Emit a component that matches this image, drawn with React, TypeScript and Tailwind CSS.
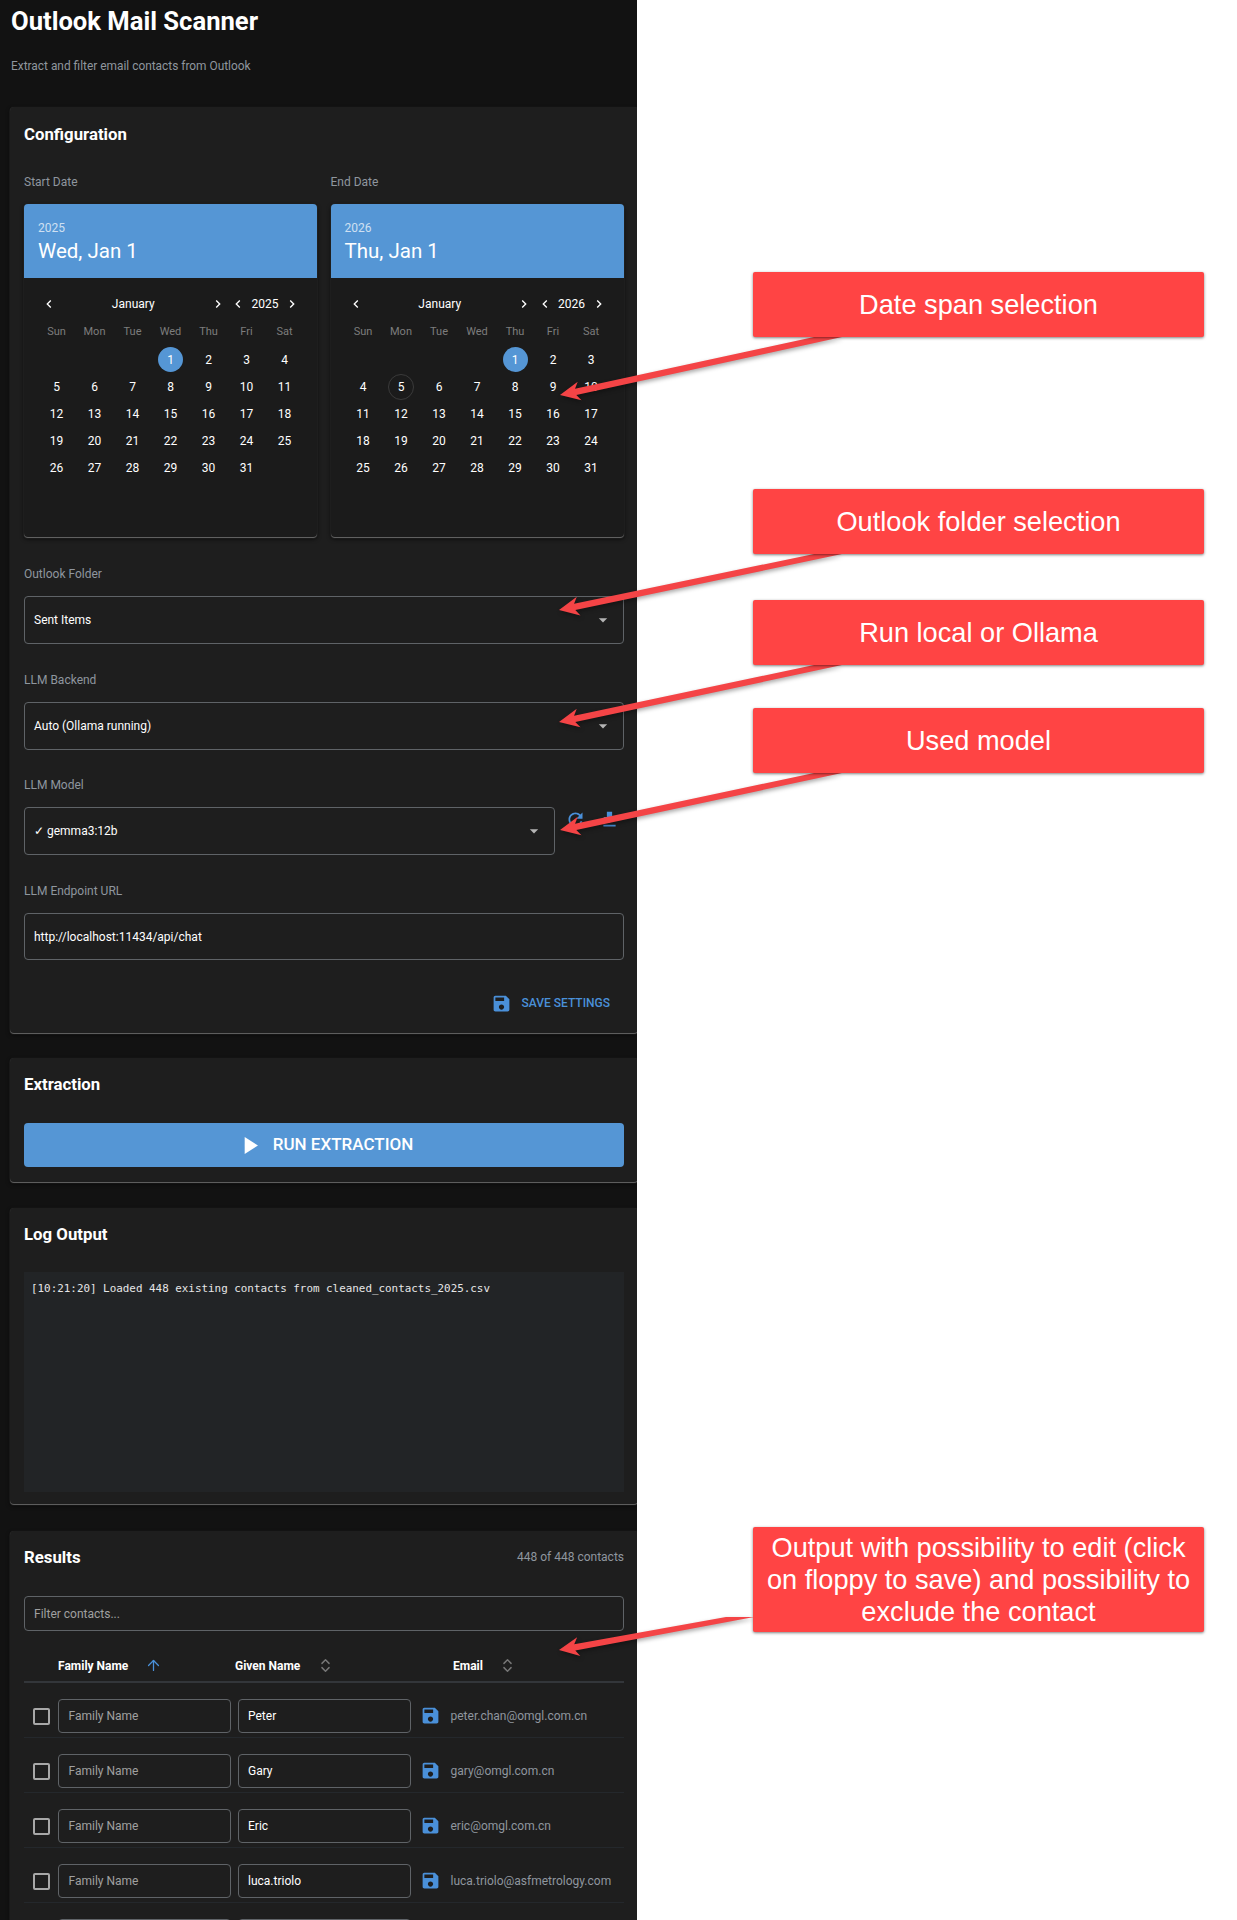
import React from 'react'
import { ArrowUp, ChevronsUpDown } from 'lucide-react'

const savePath = 'M17 3H5c-1.11 0-2 .9-2 2v14c0 1.1.89 2 2 2h14c1.1 0 2-.9 2-2V7l-4-4zm-5 16c-1.66 0-3-1.34-3-3s1.34-3 3-3 3 1.34 3 3-1.34 3-3 3zm3-10H5V5h10v4z'
const refreshPath = 'M17.65 6.35C16.2 4.9 14.21 4 12 4c-4.42 0-7.99 3.58-7.99 8s3.57 8 7.99 8c3.73 0 6.84-2.55 7.73-6h-2.08c-.82 2.33-3.04 4-5.65 4-3.31 0-6-2.69-6-6s2.69-6 6-6c1.66 0 3.14.69 4.22 1.78L13 11h7V4l-2.35 2.35z'
const downloadPath = 'M19 9h-4V3H9v6H5l7 7 7-7zM5 18v2h14v-2H5z'
const leftPath = 'M15.41 7.41 14 6l-6 6 6 6 1.41-1.41L10.83 12z'
const rightPath = 'M10 6 8.59 7.41 13.17 12l-4.58 4.59L10 18l6-6z'

const Icon = ({ d, className }: { d: string; className: string }) => (
  <svg viewBox="0 0 24 24" fill="currentColor" className={className}>
    <path d={d} />
  </svg>
)

const Card = ({ children, className }: { children: React.ReactNode; className: string }) => (
  <section className={`ml-[10px] w-[628px] rounded-[4px] bg-[#1e1e1e] px-[14px] shadow-[0_1px_1px_#666,0_0_1px_0_#333,0_2px_4px_rgba(0,0,0,0.6)] ${className}`}>
    {children}
  </section>
)

const CardTitle = ({ children }: { children: React.ReactNode }) => (
  <h2 className="h-[20px] text-[16.8px] leading-[20px] font-bold text-white">{children}</h2>
)

const Label = ({ children }: { children: React.ReactNode }) => (
  <div className="mb-[15px] h-[16px] pt-[1px] text-[12px] leading-[16px] text-[#8f969e]">{children}</div>
)

const Select = ({ value, className }: { value: string; className: string }) => (
  <div className={`flex h-[48px] items-center justify-between rounded-[4px] border border-[#5f6367] pl-[9px] pr-[10px] text-[12px] text-white ${className}`}>
    <span>{value}</span>
    <svg viewBox="0 0 24 24" fill="currentColor" className="h-[20px] w-[20px] text-[#b5b5b5]">
      <path d="M7 10l5 5 5-5z" />
    </svg>
  </div>
)

const weekdays = ['Sun', 'Mon', 'Tue', 'Wed', 'Thu', 'Fri', 'Sat']

interface CalendarProps {
  year: number
  title: string
  offset: number
  today?: number
}

const Calendar = ({ year, title, offset, today }: CalendarProps) => {
  const cells: (number | null)[] = [...Array(offset).fill(null), ...Array.from({ length: 31 }, (_, i) => i + 1)]
  return (
    <div className="h-[333px] w-[293px] overflow-hidden rounded-[4px] bg-[#1b1b1b] shadow-[0_1px_1px_#6a6a6a,0_0_1px_0_#3a3a3a,0_2px_4px_rgba(0,0,0,0.7)]">
      <div className="h-[74px] bg-[#5596d5] px-[14px] pt-[17px] text-white">
        <div className="text-[12px] leading-[14px] text-[#cfe0f2]">{year}</div>
        <div className="mt-[4px] text-[20.5px] leading-[24px]">{title}</div>
      </div>
      <div className="relative mx-auto mt-[14px] flex h-[24px] w-[266px] items-center text-[12px] text-white">
        <Icon d={leftPath} className="ml-[3.5px] h-[16px] w-[16px]" />
        <span className="w-[152.5px] text-center">January</span>
        <Icon d={rightPath} className="h-[16px] w-[16px]" />
        <Icon d={leftPath} className="ml-[4.5px] h-[16px] w-[16px]" />
        <span className="w-[38px] text-center">{year}</span>
        <Icon d={rightPath} className="h-[16px] w-[16px]" />
      </div>
      <div className="mx-auto mt-[5px] grid w-[266px] grid-cols-7 text-center">
        {weekdays.map((d) => (
          <div key={d} className="h-[25px] pt-[4px] text-[11px] leading-[14px] text-[#7d7d7d]">{d}</div>
        ))}
        {cells.map((n, i) => (
          <div key={i} className="flex h-[27.2px] items-center justify-center text-[12px] text-white">
            {n !== null && (
              <span
                className={
                  n === 1
                    ? 'flex h-[25px] w-[25px] items-center justify-center rounded-full bg-[#5596d5]'
                    : n === today
                      ? 'flex h-[26px] w-[26px] items-center justify-center rounded-full border border-[#3a3a3a]'
                      : ''
                }
              >
                {n}
              </span>
            )}
          </div>
        ))}
      </div>
    </div>
  )
}

// the last row only shows the top of its inputs, the rest is below the fold
const rows = [
  { given: 'Peter', email: 'peter.chan@omgl.com.cn' },
  { given: 'Gary', email: 'gary@omgl.com.cn' },
  { given: 'Eric', email: 'eric@omgl.com.cn' },
  { given: 'luca.triolo', email: 'luca.triolo@asfmetrology.com' },
  { given: '', email: '' },
]

const ContactRow = ({ given, email }: { given: string; email: string }) => (
  <div className="flex h-[55px] items-start border-b border-[#24282c] pt-[16px] text-[12px]">
    <div className="mt-[9px] ml-[9px] h-[17px] w-[17px] rounded-[2px] border-2 border-[#a8a8a8]" />
    <div className="ml-[8px] flex h-[34px] w-[173px] items-center rounded-[4px] border border-[#5f6367] px-[9.5px] text-[#a0a0a0]">{given && 'Family Name'}</div>
    <div className="ml-[6.5px] flex h-[34px] w-[173px] items-center rounded-[4px] border border-[#5f6367] px-[9.5px] text-white">{given}</div>
    <Icon d={savePath} className="mt-[6px] ml-[9px] h-[21px] w-[21px] text-[#4a90d9]" />
    <span className="ml-[10px] mt-[9px] leading-[16px] text-[#8f969e]">{email}</span>
  </div>
)

const Arrow = ({ tip, tail }: { tip: [number, number]; tail: [number, number] }) => {
  const dx = tail[0] - tip[0]
  const dy = tail[1] - tip[1]
  const len = Math.hypot(dx, dy)
  const ux = dx / len
  const uy = dy / len
  const nx = -uy
  const ny = ux
  const at = (along: number, side: number) => `${tip[0] + ux * along + nx * side},${tip[1] + uy * along + ny * side}`
  const points = [
    `${tip[0]},${tip[1]}`,
    at(20, -9.5),
    at(16, -3.2),
    `${tail[0] - 28},${tail[1]}`,
    `${tail[0]},${tail[1]}`,
    at(16, 3.2),
    at(20, 9.5),
  ].join(' ')
  return <polygon points={points} fill="#f44446" />
}

const callouts = [
  { text: 'Date span selection', className: 'top-[272px] h-[65px]' },
  { text: 'Outlook folder selection', className: 'top-[489px] h-[65px]' },
  { text: 'Run local or Ollama', className: 'top-[600px] h-[65px]' },
  { text: 'Used model', className: 'top-[708px] h-[65px]' },
  { text: 'Output with possibility to edit (click on floppy to save) and possibility to exclude the contact', className: 'top-[1527px] h-[105px]' },
]

export default function App() {
  return (
    <div className="relative h-[1920px] w-[1237px] overflow-hidden bg-white font-['Roboto',sans-serif]">
      <main className="h-[1920px] w-[637px] overflow-hidden bg-[#121212]">
        <header className="h-[107px] px-[11px] pt-[7px]">
          <h1 className="text-[25.6px] leading-[28px] font-bold text-white">Outlook Mail Scanner</h1>
          <p className="mt-[23px] text-[11.9px] leading-[16px] text-[#8f969e]">Extract and filter email contacts from Outlook</p>
        </header>

        <Card className="h-[926px] pt-[17px]">
          <CardTitle>Configuration</CardTitle>
          <div className="mt-[30px] flex gap-[13.5px]">
            <div>
              <div className="mb-[14px] h-[16px] text-[12px] leading-[16px] text-[#8f969e]">Start Date</div>
              <Calendar year={2025} title="Wed, Jan 1" offset={3} />
            </div>
            <div>
              <div className="mb-[14px] h-[16px] text-[12px] leading-[16px] text-[#8f969e]">End Date</div>
              <Calendar year={2026} title="Thu, Jan 1" offset={4} today={5} />
            </div>
          </div>

          <div className="mt-[28px]">
            <Label>Outlook Folder</Label>
            <Select value="Sent Items" className="w-[600px]" />
          </div>
          <div className="mt-[27px]">
            <Label>LLM Backend</Label>
            <Select value="Auto (Ollama running)" className="w-[600px]" />
          </div>
          <div className="mt-[26px]">
            <Label>LLM Model</Label>
            <div className="flex items-start">
              <Select value="✓ gemma3:12b" className="w-[531px]" />
              <Icon d={refreshPath} className="mt-[2px] ml-[10px] h-[21px] w-[21px] text-[#4a90d9]" />
              <Icon d={downloadPath} className="mt-[2px] ml-[13px] h-[21px] w-[21px] text-[#4a90d9]" />
            </div>
          </div>
          <div className="mt-[27px]">
            <Label>LLM Endpoint URL</Label>
            <div className="flex h-[47px] w-[600px] items-center rounded-[4px] border border-[#5f6367] px-[9px] text-[12px] text-white">http://localhost:11434/api/chat</div>
          </div>
          <div className="mt-[28px] flex h-[30px] w-[600px] items-center justify-end pr-[14px]">
            <Icon d={savePath} className="h-[21px] w-[21px] text-[#4a90d9]" />
            <span className="ml-[10px] text-[12px] font-medium text-[#4a90d9]">SAVE SETTINGS</span>
          </div>
        </Card>

        <Card className="mt-[25px] h-[124px] pt-[16px]">
          <CardTitle>Extraction</CardTitle>
          <div className="mt-[29px] flex h-[44px] w-[600px] items-center justify-center rounded-[4px] bg-[#5596d5] text-[17px] font-medium text-white">
            <svg viewBox="0 0 24 24" fill="currentColor" className="h-[29px] w-[29px]">
              <path d="M8 5v14l11-7z" />
            </svg>
            <span className="ml-[9px]">RUN EXTRACTION</span>
          </div>
        </Card>

        <Card className="mt-[26px] h-[296px] pt-[16px]">
          <CardTitle>Log Output</CardTitle>
          <div className="mt-[28px] h-[220px] w-[600px] bg-[#222426] px-[7px] pt-[10px] font-['DejaVu_Sans_Mono',monospace] text-[10.9px] leading-[14px] text-[#e6e6e6]">
            [10:21:20] Loaded 448 existing contacts from cleaned_contacts_2025.csv
          </div>
        </Card>

        <Card className="mt-[27px] pt-[16px]">
          <div className="flex w-[600px] items-center justify-between">
            <CardTitle>Results</CardTitle>
            <span className="text-[12px] text-[#8f969e]">448 of 448 contacts</span>
          </div>
          <div className="mt-[29px] flex h-[35px] w-[600px] items-center rounded-[4px] border border-[#5f6367] px-[9px] text-[12px] text-[#a0a0a0]">Filter contacts...</div>
          <div className="mt-[19px] flex h-[33px] w-[600px] items-center whitespace-nowrap border-b-2 border-[#33363a] text-[12px] font-bold text-white">
            <span className="ml-[34px] w-[72px]">Family Name</span>
            <ArrowUp size={17} strokeWidth={1.8} className="ml-[15px] text-[#4a90d9]" />
            <span className="ml-[73px] w-[68px]">Given Name</span>
            <ChevronsUpDown size={17} className="ml-[14px] text-[#777]" />
            <span className="ml-[119px] w-[30px]">Email</span>
            <ChevronsUpDown size={17} className="ml-[16px] text-[#777]" />
          </div>
          <div className="w-[600px]">
            {rows.map((r, i) => (
              <ContactRow key={i} given={r.given} email={r.email} />
            ))}
          </div>
        </Card>
      </main>

      <svg className="absolute top-0 left-0 h-[1920px] w-[1237px] drop-shadow-[1px_2px_2px_rgba(0,0,0,0.35)]" viewBox="0 0 1237 1920">
        <Arrow tip={[560, 395]} tail={[842, 337]} />
        <Arrow tip={[559, 610]} tail={[842, 554]} />
        <Arrow tip={[559, 722]} tail={[842, 665]} />
        <Arrow tip={[560, 830]} tail={[842, 773]} />
        <Arrow tip={[559, 1650]} tail={[754, 1617]} />
      </svg>

      {callouts.map((c) => (
        <div
          key={c.text}
          className={`absolute left-[753px] flex w-[451px] items-center justify-center rounded-[2px] bg-[#ff4444] px-[8px] pt-[1px] text-center font-['Liberation_Sans',sans-serif] text-[27.2px] leading-[32px] text-white shadow-[0_1px_3px_rgba(0,0,0,0.5)] ${c.className}`}
        >
          {c.text}
        </div>
      ))}
    </div>
  )
}
